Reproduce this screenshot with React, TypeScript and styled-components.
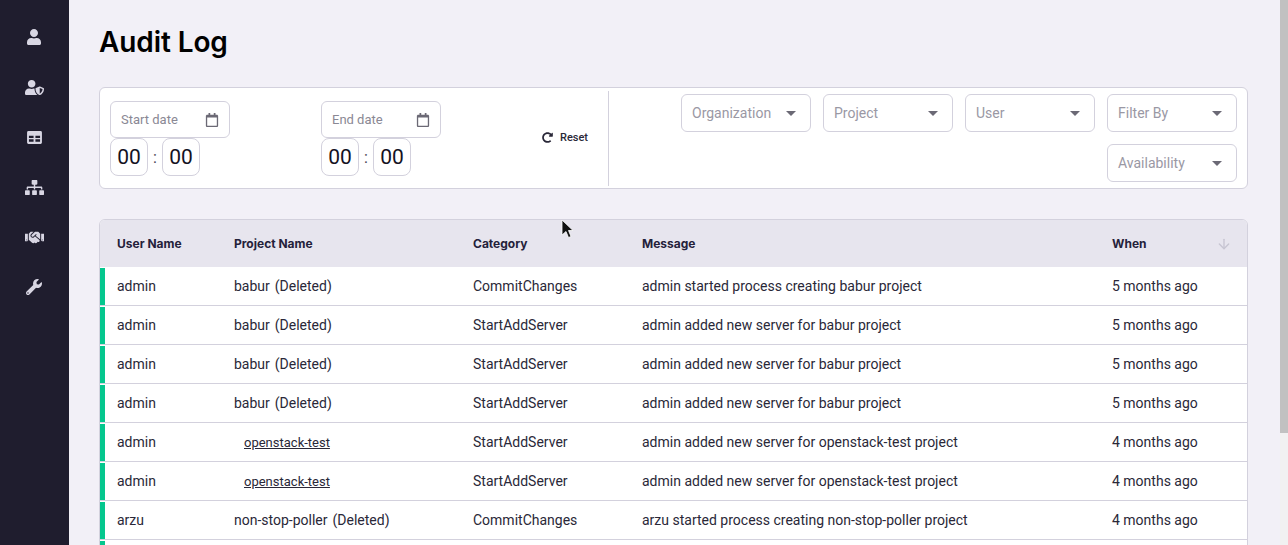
import React from "react";
import styled, { createGlobalStyle } from "styled-components";
import { FaUser, FaUserShield, FaSitemap, FaHandshake, FaWrench, FaRegCalendar, FaRedoAlt } from "react-icons/fa";
import { ArrowDown } from "lucide-react";

type LogRow = {
  user: string;
  project: string;
  deleted: boolean;
  category: string;
  message: string;
  when: string;
};

const rows: LogRow[] = [
  { user: "admin", project: "babur", deleted: true, category: "CommitChanges", message: "admin started process creating babur project", when: "5 months ago" },
  { user: "admin", project: "babur", deleted: true, category: "StartAddServer", message: "admin added new server for babur project", when: "5 months ago" },
  { user: "admin", project: "babur", deleted: true, category: "StartAddServer", message: "admin added new server for babur project", when: "5 months ago" },
  { user: "admin", project: "babur", deleted: true, category: "StartAddServer", message: "admin added new server for babur project", when: "5 months ago" },
  { user: "admin", project: "openstack-test", deleted: false, category: "StartAddServer", message: "admin added new server for openstack-test project", when: "4 months ago" },
  { user: "admin", project: "openstack-test", deleted: false, category: "StartAddServer", message: "admin added new server for openstack-test project", when: "4 months ago" },
  { user: "arzu", project: "non-stop-poller", deleted: true, category: "CommitChanges", message: "arzu started process creating non-stop-poller project", when: "4 months ago" },
];

const GlobalStyle = createGlobalStyle`
  * { box-sizing: border-box; }
  body {
    margin: 0;
    background: #f2f0f7;
    font-family: Roboto, sans-serif;
    color: #2a2838;
  }
`;

const Page = styled.div`
  display: flex;
  height: 100vh;
  overflow: hidden;
`;

const Sidebar = styled.nav`
  flex: 0 0 69px;
  background: #1f1d2e;
  display: flex;
  flex-direction: column;
  align-items: center;
  padding: 12px 1px 0 0;
`;

const NavIcon = styled.div`
  height: 50px;
  width: 100%;
  display: flex;
  align-items: center;
  justify-content: center;
  color: #d8d6e3;
  font-size: 16px;
`;

const Main = styled.main`
  flex: 1;
  min-width: 0;
  padding: 0 32px 0 30px;
`;

const ScrollTrack = styled.div`
  flex: 0 0 8px;
  background: #f1f1f1;
`;

const ScrollThumb = styled.div`
  height: 433px;
  background: #c1c1c1;
`;

const Title = styled.h1`
  margin: 0;
  height: 87px;
  padding-top: 24px;
  font-family: Inter, sans-serif;
  font-size: 28px;
  line-height: 36px;
  font-weight: 600;
  letter-spacing: -0.1px;
  color: #000;
`;

const FilterCard = styled.section`
  display: flex;
  height: 102px;
  background: #fff;
  border: 1px solid #d3d1dd;
  border-radius: 6px;
  padding: 3px 0 2px;
`;

const DatePane = styled.div`
  width: 509px;
  border-right: 1px solid #d3d1dd;
  display: flex;
  padding: 10px 0 0 10px;
`;

const DateGroup = styled.div`
  width: 211px;
`;

const DateInput = styled.div`
  width: 120px;
  height: 37px;
  border: 1px solid #d3d1dd;
  border-radius: 6px;
  display: flex;
  align-items: center;
  justify-content: space-between;
  padding: 0 10px;
  font-size: 13px;
  color: #8a8894;
  svg {
    color: #6b6975;
    font-size: 14px;
  }
`;

const TimeRow = styled.div`
  display: flex;
  align-items: center;
`;

const TimeBox = styled.div`
  width: 38px;
  height: 38px;
  border: 1px solid #d3d1dd;
  border-radius: 8px;
  display: flex;
  align-items: center;
  justify-content: center;
  font-size: 21px;
  color: #14121f;
`;

const Colon = styled.span`
  width: 14px;
  text-align: center;
  font-size: 16px;
  color: #4a4856;
`;

const ResetButton = styled.button`
  align-self: flex-start;
  margin: 25px 0 0 10px;
  padding: 0;
  border: none;
  background: none;
  display: flex;
  align-items: center;
  gap: 7px;
  height: 22px;
  font-family: Roboto, sans-serif;
  font-size: 11px;
  font-weight: 500;
  color: #2a2838;
  svg {
    font-size: 11px;
  }
`;

const SelectPane = styled.div`
  flex: 1;
  display: flex;
  flex-wrap: wrap;
  justify-content: flex-end;
  align-content: flex-start;
  gap: 12px;
  padding: 3px 10px 0 0;
`;

const Select = styled.div`
  width: 130px;
  height: 38px;
  border: 1px solid #d3d1dd;
  border-radius: 6px;
  display: flex;
  align-items: center;
  justify-content: space-between;
  padding: 0 14px 0 10px;
  font-size: 14px;
  color: #9a98a4;
`;

const Caret = styled.span`
  width: 0;
  height: 0;
  border-left: 5px solid transparent;
  border-right: 5px solid transparent;
  border-top: 5px solid #6b6975;
`;

const TableCard = styled.section`
  position: relative;
  margin-top: 30px;
  background: #fff;
  border: 1px solid #d3d1dd;
  border-radius: 6px;
  overflow: hidden;
`;

const HeaderRow = styled.div`
  display: grid;
  grid-template-columns: 134px 239px 169px 470px 1fr;
  height: 47px;
  align-items: center;
  background: #e7e5ee;
  font-family: Inter, sans-serif;
  font-size: 12px;
  font-weight: 700;
  color: #24213a;
`;

const HeaderCell = styled.div<{ $first?: boolean }>`
  display: flex;
  align-items: center;
  justify-content: space-between;
  padding-left: ${(p) => (p.$first ? "17px" : "0")};
  padding-right: 15px;
  svg {
    color: #c7c5d2;
  }
`;

const Row = styled.div`
  display: grid;
  grid-template-columns: 5px 129px 239px 169px 470px 1fr;
  height: 39px;
  align-items: center;
  border-bottom: 1px solid #d3d1dd;
  font-size: 14px;
  color: #2a2838;
`;

const StatusBar = styled.span`
  align-self: stretch;
  margin: 1px 0 0;
  background: #05c78e;
`;

const UserCell = styled.div`
  padding-left: 12px;
`;

const Deleted = styled.span`
  margin-left: 5px;
`;

const ProjectLink = styled.a`
  margin-left: 10px;
  font-size: 13px;
  color: #2a2838;
  text-decoration: underline;
`;

const Cursor = styled.svg`
  position: absolute;
  left: 461px;
  top: -1px;
`;

const navItems = [
  <FaUser key="user" />,
  <FaUserShield key="shield" size={19} />,
  <svg key="table" width="15" height="13" viewBox="0 0 16 14" fill="currentColor">
    <path d="M1.5 0h13A1.5 1.5 0 0 1 16 1.500v11a1.500 1.500 0 0 1-1.500 1.500h-13A1.500 1.500 0 0 1 0 12.500v-11A1.500 1.500 0 0 1 1.500 0zM2 5v2.500h5V5zm7 0v2.500h5V5zM2 9v2.500h5V9zm7 0v2.500h5V9z" fillRule="evenodd" />
  </svg>,
  <FaSitemap key="sitemap" size={19} />,
  <FaHandshake key="handshake" size={19} />,
  <FaWrench key="wrench" />,
];

const selects = ["Organization", "Project", "User", "Filter By", "Availability"];

function DateField({ label }: { label: string }) {
  return (
    <DateGroup>
      <DateInput>
        {label}
        <FaRegCalendar />
      </DateInput>
      <TimeRow>
        <TimeBox>00</TimeBox>
        <Colon>:</Colon>
        <TimeBox>00</TimeBox>
      </TimeRow>
    </DateGroup>
  );
}

export default function App() {
  return (
    <Page>
      <GlobalStyle />
      <Sidebar>
        {navItems.map((icon, i) => (
          <NavIcon key={i}>{icon}</NavIcon>
        ))}
      </Sidebar>
      <Main>
        <Title>Audit Log</Title>
        <FilterCard>
          <DatePane>
            <DateField label="Start date" />
            <DateField label="End date" />
            <ResetButton>
              <FaRedoAlt />
              Reset
            </ResetButton>
          </DatePane>
          <SelectPane>
            {selects.map((s) => (
              <Select key={s}>
                {s}
                <Caret />
              </Select>
            ))}
          </SelectPane>
        </FilterCard>
        <TableCard>
          <HeaderRow>
            <HeaderCell $first>User Name</HeaderCell>
            <HeaderCell>Project Name</HeaderCell>
            <HeaderCell>Category</HeaderCell>
            <HeaderCell>Message</HeaderCell>
            <HeaderCell>
              When
              <ArrowDown size={16} />
            </HeaderCell>
          </HeaderRow>
          {rows.map((r, i) => (
            <Row key={i}>
              <StatusBar />
              <UserCell>{r.user}</UserCell>
              <div>
                {r.deleted ? (
                  <>
                    {r.project}
                    <Deleted>(Deleted)</Deleted>
                  </>
                ) : (
                  <ProjectLink href="#">{r.project}</ProjectLink>
                )}
              </div>
              <div>{r.category}</div>
              <div>{r.message}</div>
              <div>{r.when}</div>
            </Row>
          ))}
          <Row>
            <StatusBar />
          </Row>
          <Cursor width="13" height="20" viewBox="0 0 13 20">
            <path d="M1 1v15l4-3.500 2.500 6 2.500-1-2.500-6H12z" fill="#111" stroke="#fff" strokeWidth="0.8" />
          </Cursor>
        </TableCard>
      </Main>
      <ScrollTrack>
        <ScrollThumb />
      </ScrollTrack>
    </Page>
  );
}
